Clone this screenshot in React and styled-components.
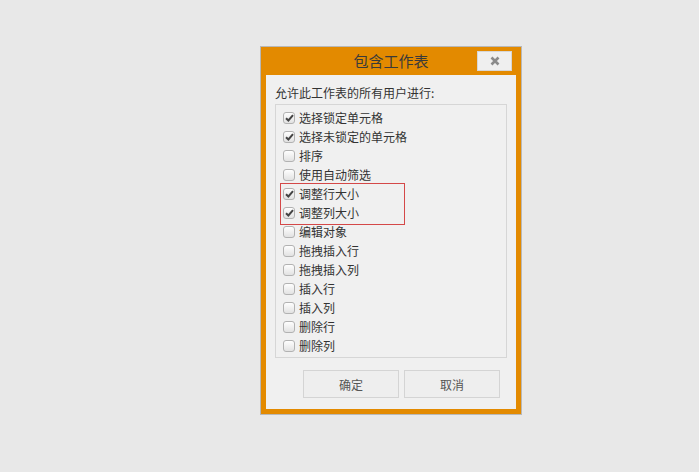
import React from "react";
import styled, { createGlobalStyle } from "styled-components";

const Global = createGlobalStyle`
  html, body { margin: 0; padding: 0; background: #e8e8e8; }
  body { font-family: "Noto Sans CJK SC", "Noto Sans", sans-serif; }
  * { box-sizing: border-box; }
`;

const Page = styled.div`
  width: 699px;
  height: 472px;
  padding: 46px 0 0 260px;
  background: #e8e8e8;
`;

const Dialog = styled.div`
  width: 262px;
  border: 1px solid #b8b8b8;
  background: #e38a00;
  display: flex;
  flex-direction: column;
`;

const Header = styled.div`
  height: 28px;
  display: grid;
  grid-template-columns: 1fr auto 1fr;
  align-items: center;
`;

const Title = styled.div`
  grid-column: 2;
  font-size: 15px;
  color: #3a3a3a;
  line-height: 28px;
`;

const CloseButton = styled.button`
  grid-column: 3;
  justify-self: end;
  margin-right: 9px;
  width: 35px;
  height: 20px;
  padding: 0;
  border: 1px solid #d6d6d6;
  background: #efefef;
  display: flex;
  align-items: center;
  justify-content: center;
`;

const Body = styled.div`
  margin: 0 5px 5px 5px;
  background: #f0f0f0;
  padding: 10px 9px 11px 9px;
  display: flex;
  flex-direction: column;
`;

const Label = styled.div`
  font-size: 12px;
  line-height: 16px;
  color: #333;
  margin-bottom: 3px;
`;

const List = styled.div`
  height: 254px;
  border: 1px solid #d6d6d6;
  padding: 3px 0 2px 0;
  display: flex;
  flex-direction: column;
`;

const Row = styled.label`
  height: 19px;
  display: flex;
  align-items: center;
  padding-left: 7px;
  gap: 4px;
  font-size: 12px;
  color: #333;
`;

const Box = styled.span`
  width: 12px;
  height: 12px;
  border: 1px solid #b2b2b2;
  border-radius: 3px;
  background: linear-gradient(#fefefe, #e2e2e2);
  display: flex;
  align-items: center;
  justify-content: center;
  flex: none;
`;

const Highlight = styled.div`
  position: relative;
  &::after {
    content: "";
    position: absolute;
    top: -1px;
    left: 4px;
    width: 123px;
    bottom: -3px;
    border: 1px solid #d44848;
    pointer-events: none;
  }
`;

const Buttons = styled.div`
  margin-top: 12px;
  padding-left: 28px;
  display: flex;
  gap: 5px;
`;

const Button = styled.button`
  width: 96px;
  height: 28px;
  border: 1px solid #d4d4d4;
  background: #eeeeee;
  font-family: "Noto Sans CJK SC", sans-serif;
  font-size: 12px;
  color: #555;
  padding: 0;
`;

const Check = () => (
  <svg width="9" height="8" viewBox="0 0 9 8">
    <path d="M1 4.2 L3.4 6.5 L8 1.2" fill="none" stroke="#444" strokeWidth="2" />
  </svg>
);

const CheckRow = ({ checked, children }) => (
  <Row>
    <Box>{checked && <Check />}</Box>
    {children}
  </Row>
);

export default function App() {
  return (
    <>
      <Global />
      <Page>
        <Dialog>
          <Header>
            <Title>包含工作表</Title>
            <CloseButton>
              <svg width="10" height="10" viewBox="0 0 10 10">
                <path d="M1.5 1.5 L8.5 8.5 M8.5 1.5 L1.5 8.5" stroke="#8a8a8a" strokeWidth="2.6" />
              </svg>
            </CloseButton>
          </Header>
          <Body>
            <Label>允许此工作表的所有用户进行:</Label>
            <List>
              <CheckRow checked>选择锁定单元格</CheckRow>
              <CheckRow checked>选择未锁定的单元格</CheckRow>
              <CheckRow>排序</CheckRow>
              <CheckRow>使用自动筛选</CheckRow>
              <Highlight>
                <CheckRow checked>调整行大小</CheckRow>
                <CheckRow checked>调整列大小</CheckRow>
              </Highlight>
              <CheckRow>编辑对象</CheckRow>
              <CheckRow>拖拽插入行</CheckRow>
              <CheckRow>拖拽插入列</CheckRow>
              <CheckRow>插入行</CheckRow>
              <CheckRow>插入列</CheckRow>
              <CheckRow>删除行</CheckRow>
              <CheckRow>删除列</CheckRow>
            </List>
            <Buttons>
              <Button>确定</Button>
              <Button>取消</Button>
            </Buttons>
          </Body>
        </Dialog>
      </Page>
    </>
  );
}
